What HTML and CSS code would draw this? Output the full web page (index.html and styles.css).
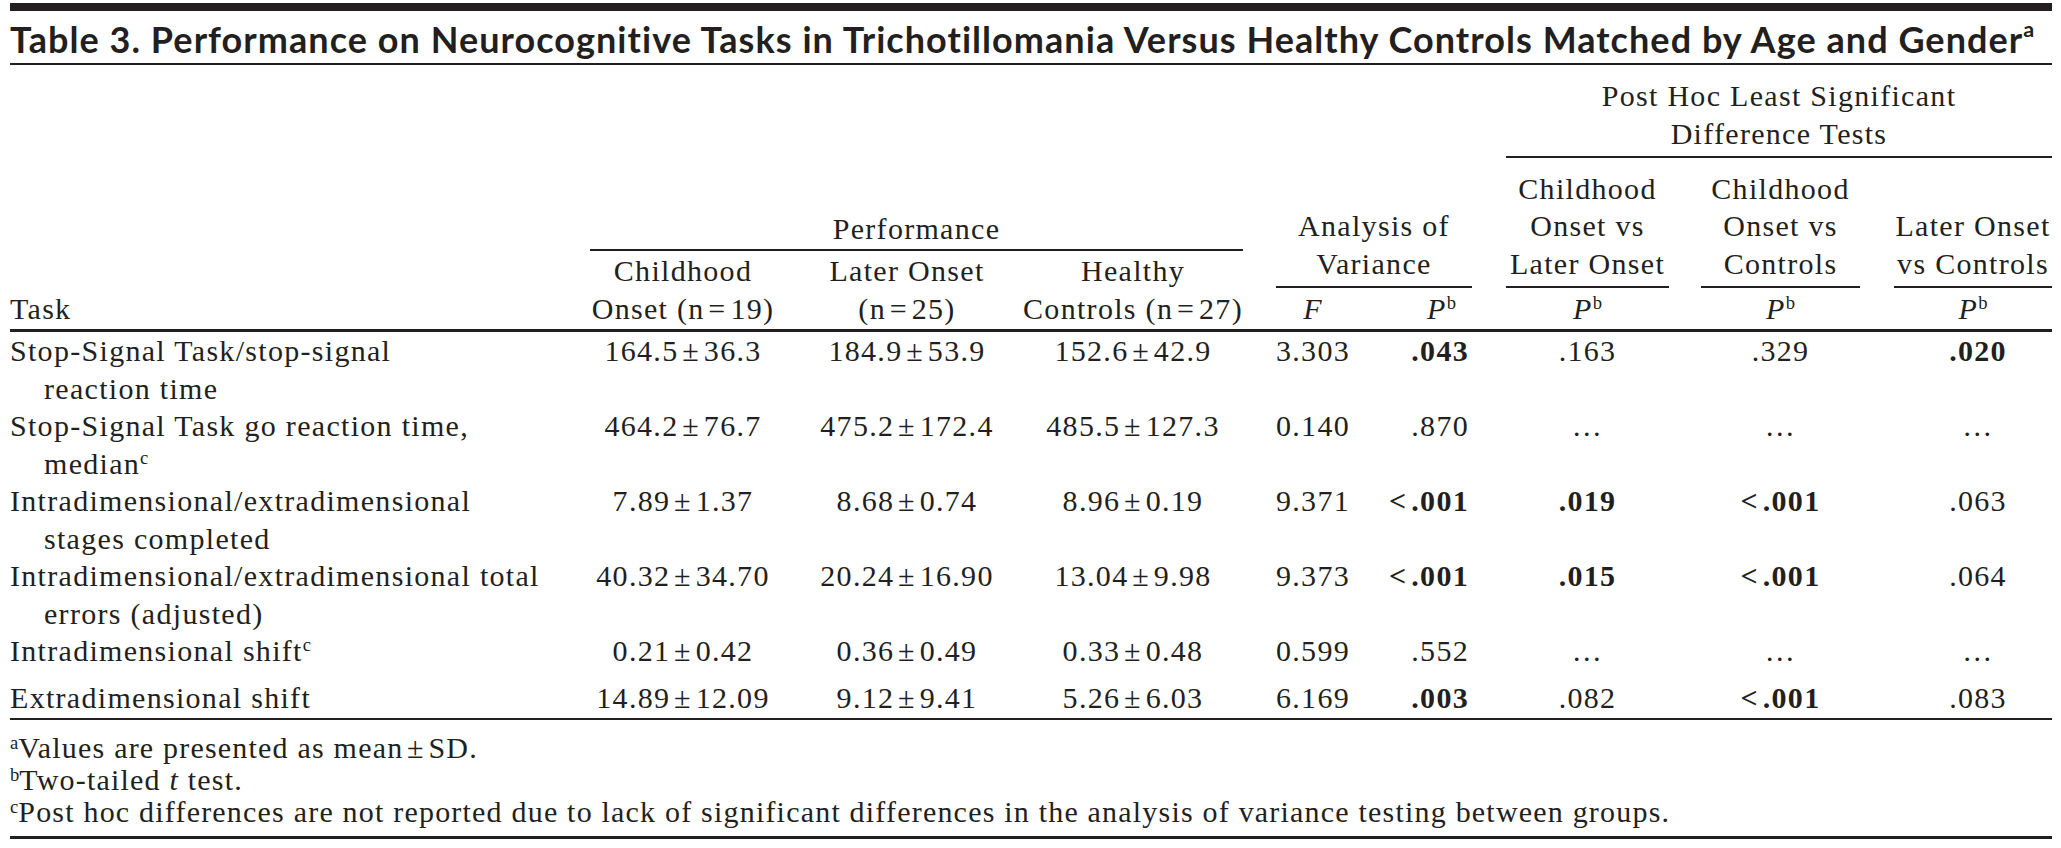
FILE: index.html
```html
<!DOCTYPE html>
<html lang="en">
<head>
<meta charset="utf-8">
<title>Table 3</title>
<link rel="stylesheet" href="styles.css">
</head>
<body>
<div class="page">
  <div class="topbar"></div>
  <div class="title">Table 3. Performance on Neurocognitive Tasks in Trichotillomania Versus Healthy Controls Matched by Age and Gender<sup>a</sup></div>
  <div class="tbl">
    <div class="grid head">
      <div class="h ruled posthoc">Post Hoc Least Significant<br>Difference Tests</div>
      <div class="h ruled perf">Performance</div>
      <div class="h ruled aov">Analysis of<br>Variance</div>
      <div class="h ruled ph1">Childhood<br>Onset vs<br>Later Onset</div>
      <div class="h ruled ph2">Childhood<br>Onset vs<br>Controls</div>
      <div class="h ruled ph3">Later Onset<br>vs Controls</div>
      <div class="h sub s2">Childhood<br>Onset (n&#8202;=&#8202;19)</div>
      <div class="h sub s3">Later Onset<br>(n&#8202;=&#8202;25)</div>
      <div class="h sub s4">Healthy<br>Controls (n&#8202;=&#8202;27)</div>
      <div class="h last-row task-h">Task</div>
      <div class="h last-row fh"><i>F</i></div>
      <div class="h last-row ph"><i>P</i><sup>b</sup></div>
      <div class="h last-row p7"><i>P</i><sup>b</sup></div>
      <div class="h last-row p11"><i>P</i><sup>b</sup></div>
      <div class="h last-row p13"><i>P</i><sup>b</sup></div>
    </div>
    <div class="rows">
      <div class="grid row">
        <div class="task">Stop-Signal Task/stop-signal<br>reaction time</div>
        <div class="v c2">164.5&#8202;±&#8202;36.3</div>
        <div class="v c3">184.9&#8202;±&#8202;53.9</div>
        <div class="v c4">152.6&#8202;±&#8202;42.9</div>
        <div class="v c6">3.303</div>
        <div class="v c7"><b>.043</b></div>
        <div class="v c9">.163</div>
        <div class="v c11">.329</div>
        <div class="v c13"><b>.020</b></div>
      </div>
      <div class="grid row">
        <div class="task">Stop-Signal Task go reaction time,<br>median<sup>c</sup></div>
        <div class="v c2">464.2&#8202;±&#8202;76.7</div>
        <div class="v c3">475.2&#8202;±&#8202;172.4</div>
        <div class="v c4">485.5&#8202;±&#8202;127.3</div>
        <div class="v c6">0.140</div>
        <div class="v c7">.870</div>
        <div class="v c9">…</div>
        <div class="v c11">…</div>
        <div class="v c13">…</div>
      </div>
      <div class="grid row">
        <div class="task">Intradimensional/extradimensional<br>stages completed</div>
        <div class="v c2">7.89&#8202;±&#8202;1.37</div>
        <div class="v c3">8.68&#8202;±&#8202;0.74</div>
        <div class="v c4">8.96&#8202;±&#8202;0.19</div>
        <div class="v c6">9.371</div>
        <div class="v c7"><b>&lt;&#8202;.001</b></div>
        <div class="v c9"><b>.019</b></div>
        <div class="v c11"><b>&lt;&#8202;.001</b></div>
        <div class="v c13">.063</div>
      </div>
      <div class="grid row">
        <div class="task">Intradimensional/extradimensional total<br>errors (adjusted)</div>
        <div class="v c2">40.32&#8202;±&#8202;34.70</div>
        <div class="v c3">20.24&#8202;±&#8202;16.90</div>
        <div class="v c4">13.04&#8202;±&#8202;9.98</div>
        <div class="v c6">9.373</div>
        <div class="v c7"><b>&lt;&#8202;.001</b></div>
        <div class="v c9"><b>.015</b></div>
        <div class="v c11"><b>&lt;&#8202;.001</b></div>
        <div class="v c13">.064</div>
      </div>
      <div class="grid row">
        <div class="task">Intradimensional shift<sup>c</sup></div>
        <div class="v c2">0.21&#8202;±&#8202;0.42</div>
        <div class="v c3">0.36&#8202;±&#8202;0.49</div>
        <div class="v c4">0.33&#8202;±&#8202;0.48</div>
        <div class="v c6">0.599</div>
        <div class="v c7">.552</div>
        <div class="v c9">…</div>
        <div class="v c11">…</div>
        <div class="v c13">…</div>
      </div>
      <div class="grid row final">
        <div class="task">Extradimensional shift</div>
        <div class="v c2">14.89&#8202;±&#8202;12.09</div>
        <div class="v c3">9.12&#8202;±&#8202;9.41</div>
        <div class="v c4">5.26&#8202;±&#8202;6.03</div>
        <div class="v c6">6.169</div>
        <div class="v c7"><b>.003</b></div>
        <div class="v c9">.082</div>
        <div class="v c11"><b>&lt;&#8202;.001</b></div>
        <div class="v c13">.083</div>
      </div>
    </div>
    <div class="notes">
      <div><sup>a</sup>Values are presented as mean&#8202;±&#8202;SD.</div>
      <div><sup>b</sup>Two-tailed <i>t</i> test.</div>
      <div><sup>c</sup>Post hoc differences are not reported due to lack of significant differences in the analysis of variance testing between groups.</div>
    </div>
  </div>
</div>
</body>
</html>
```

FILE: styles.css
```css
html, body {
  margin: 0;
  padding: 0;
  background: #ffffff;
  color: #231f20;
}

.page {
  width: 2042px;
  margin-left: 10px;
  padding-top: 3px;
}

.topbar {
  height: 8px;
  background: #231f20;
}

.title {
  font-family: Lato, "Open Sans", sans-serif;
  font-weight: 700;
  font-size: 36px;
  letter-spacing: 1.05px;
  line-height: 48px;
  padding-top: 4px;
  white-space: nowrap;
  border-bottom: 2px solid #231f20;
}

.title sup {
  font-size: 0.6em;
  line-height: 0;
  vertical-align: 0.75em;
  letter-spacing: 0;
}

.tbl {
  font-family: "Liberation Serif", "Times New Roman", serif;
  font-size: 30px;
  letter-spacing: 1.3px;
  line-height: 37.5px;
}

.tbl sup {
  font-size: 0.62em;
  line-height: 0;
  vertical-align: 0.55em;
  letter-spacing: 0;
}

.grid {
  display: grid;
  grid-template-columns: 580px 186px 247px 220px 33px 74px 122px 34px 163px 32px 159px 34px 158px;
}

.head {
  grid-template-rows: 93px 93px 37px 41px;
  border-bottom: 3px solid #231f20;
}

.h {
  align-self: end;
  text-align: center;
  white-space: nowrap;
  padding-bottom: 2px;
}

.h.ruled {
  border-bottom: 2px solid #231f20;
  padding-bottom: 4px;
}

.posthoc { grid-column: 9 / 14; grid-row: 1; }
.perf { grid-column: 2 / 5; grid-row: 2; }
.h.perf { padding-bottom: 2px; }
.aov { grid-column: 6 / 8; grid-row: 2 / 4; }
.ph1 { grid-column: 9; grid-row: 2 / 4; }
.ph2 { grid-column: 11; grid-row: 2 / 4; }
.ph3 { grid-column: 13; grid-row: 2 / 4; }

.sub { grid-row: 3 / 5; }
.s2 { grid-column: 2; }
.s3 { grid-column: 3; padding-left: 15px; }
.s4 { grid-column: 4; }

.last-row { grid-row: 4; }
.task-h { grid-column: 1; text-align: left; }
.fh { grid-column: 6; }
.ph { grid-column: 7; text-align: right; padding-right: 16px; }
.p7 { grid-column: 9; }
.p11 { grid-column: 11; }
.p13 { grid-column: 13; }

.rows {
  border-bottom: 2px solid #231f20;
  padding-bottom: 2px;
}

.row.final {
  margin-top: 9px;
}

.task {
  grid-column: 1;
  padding-left: 34px;
  text-indent: -34px;
  white-space: nowrap;
}

.v {
  align-self: start;
  text-align: center;
  white-space: nowrap;
}

.c2 { grid-column: 2; }
.c3 { grid-column: 3; padding-left: 15px; }
.c4 { grid-column: 4; }
.c6 { grid-column: 6; }
.c7 { grid-column: 7; text-align: right; padding-right: 3px; }
.c9 { grid-column: 9; }
.c11 { grid-column: 11; }
.c13 { grid-column: 13; padding-left: 10px; }

.notes {
  font-size: 30px;
  line-height: 32px;
  letter-spacing: 1.2px;
  padding-top: 12px;
  padding-bottom: 8px;
  border-bottom: 3px solid #231f20;
  white-space: nowrap;
}

.notes sup {
  font-size: 0.62em;
  vertical-align: 0.5em;
}
```
